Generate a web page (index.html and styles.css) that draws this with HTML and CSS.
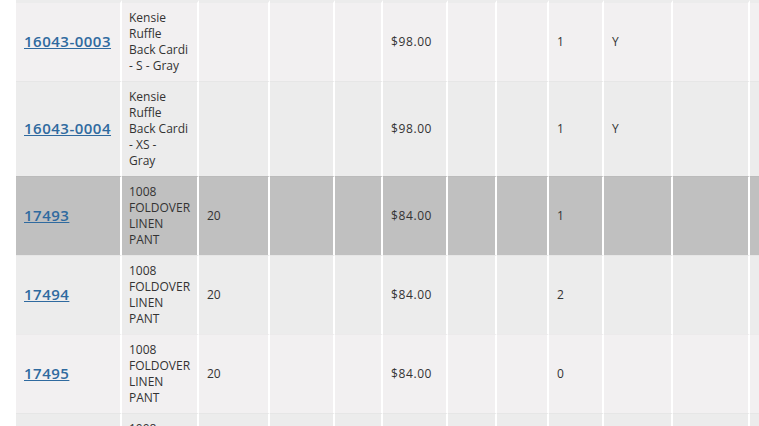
FILE: index.html
```html
<!DOCTYPE html>
<html lang="en">
<head>
<meta charset="utf-8">
<title>Items</title>
<link rel="stylesheet" href="styles.css">
</head>
<body>
<div class="viewport">
<table class="grid">
  <colgroup>
    <col class="c1"><col class="c2"><col class="c3"><col class="c4"><col class="c5"><col class="c6">
    <col class="c7"><col class="c8"><col class="c9"><col class="c10"><col class="c11"><col class="c12">
  </colgroup>
  <tbody>
    <tr class="row-odd first">
      <td><a href="#">16043-0003</a></td>
      <td class="desc">Kensie<br>Ruffle<br>Back Cardi<br>- S - Gray</td>
      <td></td><td></td><td></td><td class="price">$98.00</td><td></td><td></td><td>1</td><td>Y</td><td></td><td></td>
    </tr>
    <tr class="row-even">
      <td><a href="#">16043-0004</a></td>
      <td class="desc">Kensie<br>Ruffle<br>Back Cardi<br>- XS -<br>Gray</td>
      <td></td><td></td><td></td><td class="price">$98.00</td><td></td><td></td><td>1</td><td>Y</td><td></td><td></td>
    </tr>
    <tr class="row-hover">
      <td><a href="#">17493</a></td>
      <td class="desc">1008<br>FOLDOVER<br>LINEN<br>PANT</td>
      <td>20</td><td></td><td></td><td class="price">$84.00</td><td></td><td></td><td>1</td><td></td><td></td><td></td>
    </tr>
    <tr class="row-even">
      <td><a href="#">17494</a></td>
      <td class="desc">1008<br>FOLDOVER<br>LINEN<br>PANT</td>
      <td>20</td><td></td><td></td><td class="price">$84.00</td><td></td><td></td><td>2</td><td></td><td></td><td></td>
    </tr>
    <tr class="row-odd">
      <td><a href="#">17495</a></td>
      <td class="desc">1008<br>FOLDOVER<br>LINEN<br>PANT</td>
      <td>20</td><td></td><td></td><td class="price">$84.00</td><td></td><td></td><td>0</td><td></td><td></td><td></td>
    </tr>
    <tr class="row-even">
      <td><a href="#">17496</a></td>
      <td class="desc">1008<br>FOLDOVER<br>LINEN<br>PANT</td>
      <td>20</td><td></td><td></td><td class="price">$84.00</td><td></td><td></td><td>1</td><td></td><td></td><td></td>
    </tr>
  </tbody>
</table>
</div>
</body>
</html>
```
FILE: styles.css
```css
html, body {
  margin: 0;
  padding: 0;
  background: #ffffff;
  overflow: hidden;
}

.viewport {
  width: 759px;
  height: 426px;
  overflow: hidden;
  padding-left: 16px;
  box-sizing: border-box;
}

.grid {
  border-collapse: separate;
  border-spacing: 0;
  table-layout: fixed;
  width: 814px;
  font-family: "Open Sans", "Noto Sans", sans-serif;
  font-size: 12px;
  line-height: 16px;
  color: #333333;
}

.c1 { width: 106px; }
.c2 { width: 77px; }
.c3 { width: 71px; }
.c4 { width: 65px; }
.c5 { width: 48px; }
.c6 { width: 65px; }
.c7 { width: 49px; }
.c8 { width: 52px; }
.c9 { width: 55px; }
.c10 { width: 69px; }
.c11 { width: 77px; }
.c12 { width: 80px; }

.grid td {
  padding: 7px 4px 7px 8px;
  border-right: 2px solid #ffffff;
  border-top: 1px solid rgba(0, 0, 0, 0.025);
  vertical-align: middle;
  white-space: nowrap;
  overflow: hidden;
}

.grid .first td {
  border-top: 3px solid #ececec;
}

.grid td.desc {
  padding-left: 7px;
}

.grid td.price {
  letter-spacing: 0.6px;
}

.row-odd td { background: #f2f0f1; }
.row-even td { background: #ececec; }
.row-hover td { background: #c0c0c0; }

.grid a {
  color: #2f6a9f;
  font-size: 15px;
  font-weight: 600;
  letter-spacing: 0.5px;
  text-decoration: underline;
}
```
